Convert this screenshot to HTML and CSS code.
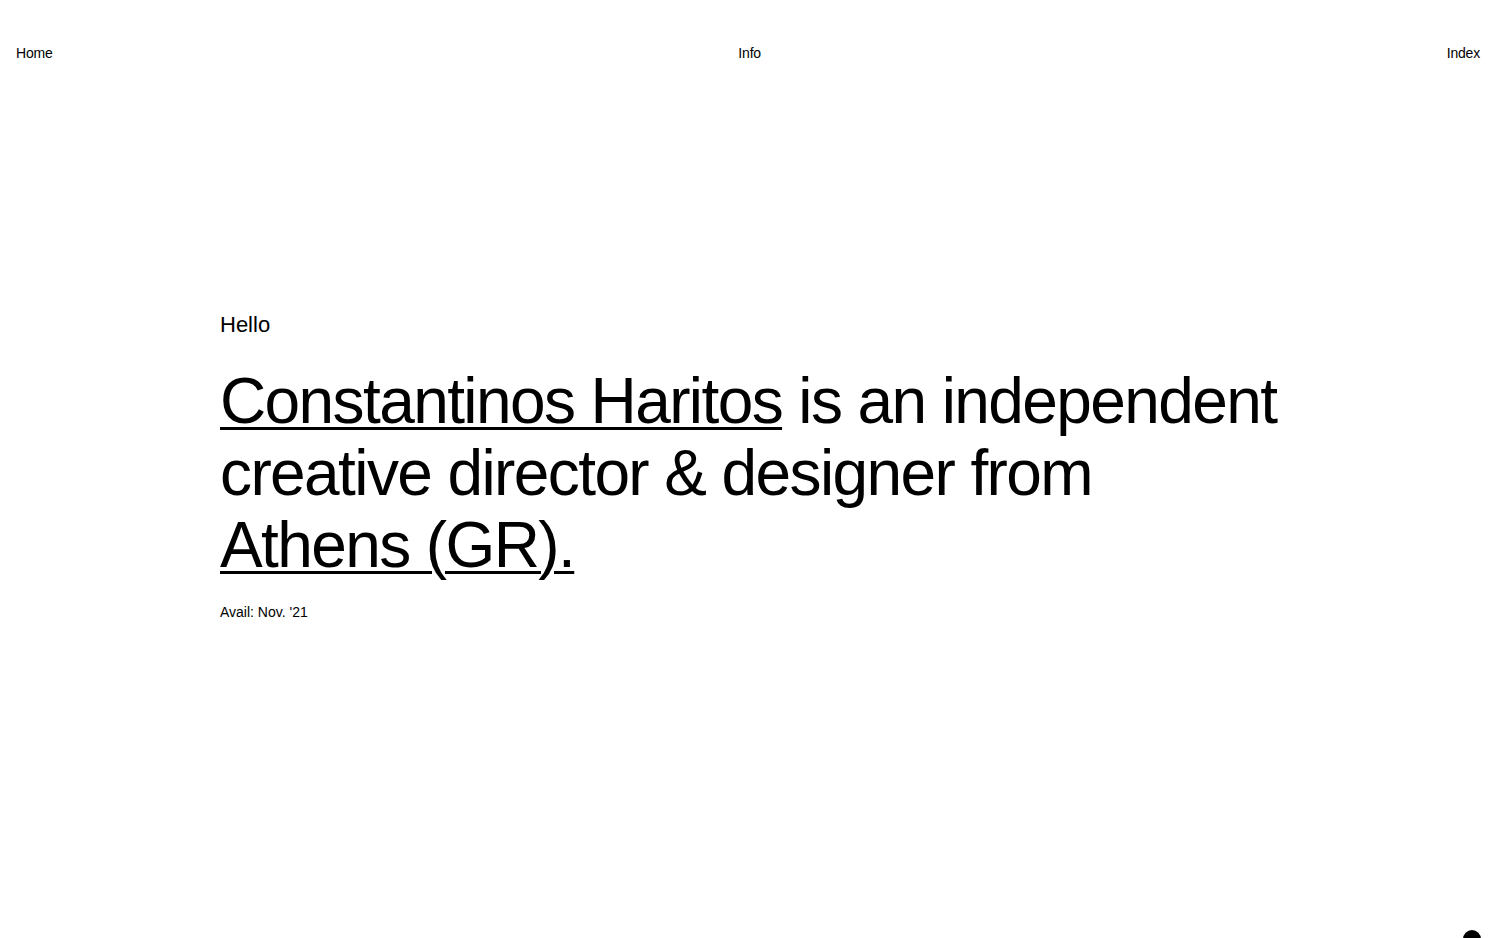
FILE: index.html
```html
<!DOCTYPE html>
<html lang="en">
<head>
<meta charset="utf-8">
<title>Constantinos Haritos</title>
<link rel="stylesheet" href="styles.css">
</head>
<body>
<header class="nav">
  <a class="nav-link" href="#">Home</a>
  <a class="nav-link" href="#">Info</a>
  <a class="nav-link" href="#">Index</a>
</header>
<main class="intro">
  <p class="hello">Hello</p>
  <h1 class="statement"><a class="u" href="#">Constantinos Haritos</a> is an independent creative director &amp; designer from <a class="u" href="#">Athens (GR).</a></h1>
  <p class="avail">Avail: Nov. '21</p>
</main>
<div class="dot"></div>
</body>
</html>
```
FILE: styles.css
```css
html, body {
  margin: 0;
  padding: 0;
  background: #fff;
  color: #000;
  font-family: "Liberation Sans", Arial, Helvetica, sans-serif;
}
a { color: inherit; text-decoration: none; }
.nav {
  display: flex;
  justify-content: space-between;
  padding: 43px 20px 0 16px;
  font-size: 14px;
  line-height: 20px;
  letter-spacing: -0.2px;
}
.intro {
  padding: 248px 0 0 220px;
}
.hello {
  margin: 0;
  font-size: 22px;
  line-height: 28px;
}
.statement {
  margin: 26px 0 0;
  font-weight: 400;
  font-size: 64px;
  line-height: 72px;
  max-width: 1100px;
  letter-spacing: -1.6px;
}
.u {
  white-space: nowrap;
  text-decoration: underline;
  text-decoration-thickness: 3px;
  text-underline-offset: 4px;
}
.avail {
  margin: 21px 0 0;
  font-size: 14px;
  line-height: 20px;
}
.dot {
  position: fixed;
  right: 19px;
  bottom: -10px;
  width: 18px;
  height: 18px;
  border-radius: 50%;
  background: #000;
}
```
